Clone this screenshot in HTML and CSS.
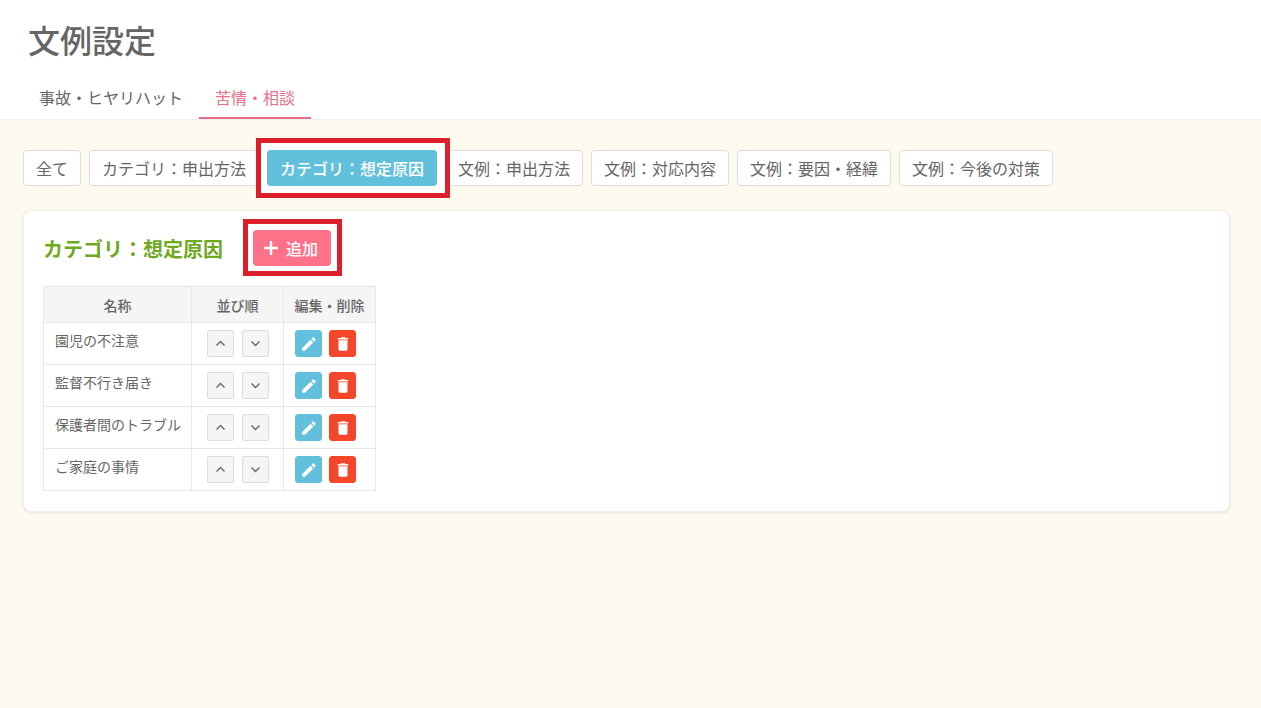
FILE: index.html
```html
<!DOCTYPE html>
<html lang="ja">
<head>
  <meta charset="UTF-8">
  <title>文例設定</title>
  <link rel="stylesheet" href="styles.css">
</head>
<body>
  <header class="page-header">
    <h1>文例設定</h1>
    <nav class="tabs">
      <a class="tab">事故・ヒヤリハット</a>
      <a class="tab active">苦情・相談</a>
    </nav>
  </header>
  <main class="content">
    <div class="filters">
      <button class="filter">全て</button>
      <button class="filter">カテゴリ：申出方法</button>
      <button class="filter active">カテゴリ：想定原因</button>
      <button class="filter">文例：申出方法</button>
      <button class="filter">文例：対応内容</button>
      <button class="filter">文例：要因・経緯</button>
      <button class="filter">文例：今後の対策</button>
    </div>
    <section class="card">
      <div class="card-head">
        <h2>カテゴリ：想定原因</h2>
        <button class="add-btn">
          <svg width="16" height="16" viewBox="0 0 16 16"><path d="M8 1v14M1 8h14" stroke="#fff" stroke-width="2.4" fill="none"/></svg>
          追加
        </button>
      </div>
      <table class="list">
        <thead>
          <tr><th class="col-name">名称</th><th class="col-order">並び順</th><th class="col-act">編集・削除</th></tr>
        </thead>
        <tbody>
          <tr>
            <td>園児の不注意</td>
            <td class="order"><button class="sq"><svg width="11" height="7" viewBox="0 0 11 7"><path d="M1.5 5.5l4-4 4 4" stroke="#666" stroke-width="1.4" fill="none"/></svg></button><button class="sq"><svg width="11" height="7" viewBox="0 0 11 7"><path d="M1.5 1.5l4 4 4-4" stroke="#666" stroke-width="1.4" fill="none"/></svg></button></td>
            <td class="actions"><button class="sq edit"><svg width="18" height="18" viewBox="0 0 24 24"><path fill="#fff" d="M3 17.25V21h3.75L17.81 9.94l-3.75-3.75L3 17.25zM20.71 7.04a1 1 0 0 0 0-1.41l-2.34-2.34a1 1 0 0 0-1.41 0l-1.83 1.83 3.75 3.75 1.83-1.83z"/></svg></button><button class="sq del"><svg width="18" height="18" viewBox="0 0 24 24"><path fill="#fff" d="M6 19c0 1.1.9 2 2 2h8c1.1 0 2-.9 2-2V7H6v12zM19 4h-3.5l-1-1h-5l-1 1H5v2h14V4z"/></svg></button></td>
          </tr>
          <tr>
            <td>監督不行き届き</td>
            <td class="order"><button class="sq"><svg width="11" height="7" viewBox="0 0 11 7"><path d="M1.5 5.5l4-4 4 4" stroke="#666" stroke-width="1.4" fill="none"/></svg></button><button class="sq"><svg width="11" height="7" viewBox="0 0 11 7"><path d="M1.5 1.5l4 4 4-4" stroke="#666" stroke-width="1.4" fill="none"/></svg></button></td>
            <td class="actions"><button class="sq edit"><svg width="18" height="18" viewBox="0 0 24 24"><path fill="#fff" d="M3 17.25V21h3.75L17.81 9.94l-3.75-3.75L3 17.25zM20.71 7.04a1 1 0 0 0 0-1.41l-2.34-2.34a1 1 0 0 0-1.41 0l-1.83 1.83 3.75 3.75 1.83-1.83z"/></svg></button><button class="sq del"><svg width="18" height="18" viewBox="0 0 24 24"><path fill="#fff" d="M6 19c0 1.1.9 2 2 2h8c1.1 0 2-.9 2-2V7H6v12zM19 4h-3.5l-1-1h-5l-1 1H5v2h14V4z"/></svg></button></td>
          </tr>
          <tr>
            <td>保護者間のトラブル</td>
            <td class="order"><button class="sq"><svg width="11" height="7" viewBox="0 0 11 7"><path d="M1.5 5.5l4-4 4 4" stroke="#666" stroke-width="1.4" fill="none"/></svg></button><button class="sq"><svg width="11" height="7" viewBox="0 0 11 7"><path d="M1.5 1.5l4 4 4-4" stroke="#666" stroke-width="1.4" fill="none"/></svg></button></td>
            <td class="actions"><button class="sq edit"><svg width="18" height="18" viewBox="0 0 24 24"><path fill="#fff" d="M3 17.25V21h3.75L17.81 9.94l-3.75-3.75L3 17.25zM20.71 7.04a1 1 0 0 0 0-1.41l-2.34-2.34a1 1 0 0 0-1.41 0l-1.83 1.83 3.75 3.75 1.83-1.83z"/></svg></button><button class="sq del"><svg width="18" height="18" viewBox="0 0 24 24"><path fill="#fff" d="M6 19c0 1.1.9 2 2 2h8c1.1 0 2-.9 2-2V7H6v12zM19 4h-3.5l-1-1h-5l-1 1H5v2h14V4z"/></svg></button></td>
          </tr>
          <tr>
            <td>ご家庭の事情</td>
            <td class="order"><button class="sq"><svg width="11" height="7" viewBox="0 0 11 7"><path d="M1.5 5.5l4-4 4 4" stroke="#666" stroke-width="1.4" fill="none"/></svg></button><button class="sq"><svg width="11" height="7" viewBox="0 0 11 7"><path d="M1.5 1.5l4 4 4-4" stroke="#666" stroke-width="1.4" fill="none"/></svg></button></td>
            <td class="actions"><button class="sq edit"><svg width="18" height="18" viewBox="0 0 24 24"><path fill="#fff" d="M3 17.25V21h3.75L17.81 9.94l-3.75-3.75L3 17.25zM20.71 7.04a1 1 0 0 0 0-1.41l-2.34-2.34a1 1 0 0 0-1.41 0l-1.83 1.83 3.75 3.75 1.83-1.83z"/></svg></button><button class="sq del"><svg width="18" height="18" viewBox="0 0 24 24"><path fill="#fff" d="M6 19c0 1.1.9 2 2 2h8c1.1 0 2-.9 2-2V7H6v12zM19 4h-3.5l-1-1h-5l-1 1H5v2h14V4z"/></svg></button></td>
          </tr>
        </tbody>
      </table>
    </section>
  </main>
</body>
</html>
```

FILE: styles.css
```css
* {
  box-sizing: border-box;
}
html, body {
  height: 100%;
}
body {
  margin: 0;
  display: flex;
  flex-direction: column;
  font-family: "Noto Sans CJK JP", "Noto Sans", sans-serif;
  color: #666;
  background: #fffaef;
  overflow: hidden;
}
button {
  font-family: inherit;
  cursor: pointer;
}
.page-header {
  height: 120px;
  padding: 15px 23px 0 23px;
  background: #fff;
  border-bottom: 1px solid #eee;
}
h1 {
  margin: 0 0 0 5px;
  height: 48px;
  font-size: 32px;
  line-height: 48px;
  font-weight: 500;
}
.tabs {
  display: flex;
  margin-top: 16px;
}
.tab {
  height: 40px;
  padding: 0 16px;
  font-size: 16px;
  line-height: 36px;
  border-bottom: 2px solid transparent;
}
.tab.active {
  color: #ea7088;
  border-bottom-color: #ea7088;
}
.content {
  flex: 1;
  padding: 30px 31px 0 23px;
}
.filters {
  display: flex;
  gap: 8px;
  margin-bottom: 24px;
}
.filter {
  position: relative;
  height: 36px;
  padding: 0 12px;
  font-size: 16px;
  line-height: 34px;
  color: #666;
  background: #fff;
  border: 1px solid #ddd;
  border-radius: 4px;
}
.filter.active {
  color: #fff;
  font-weight: 500;
  background: none;
  border-color: transparent;
  z-index: 1;
}
/* red annotation frame, drawn over the neighbours */
.filter.active::before {
  content: "";
  position: absolute;
  left: -12px;
  right: -14px;
  top: -13px;
  bottom: -13px;
  border: 5px solid #dc1f2b;
  background: #fff;
  z-index: -2;
}
.filter.active::after {
  content: "";
  position: absolute;
  inset: -1px;
  background: #62c0dd;
  border-radius: 4px;
  z-index: -1;
}
.card {
  height: 302px;
  padding: 19px;
  background: #fff;
  border: 1px solid #f2efe8;
  border-radius: 8px;
  box-shadow: 0 1px 3px rgba(0,0,0,0.1);
}
.card-head {
  display: flex;
  align-items: center;
  gap: 30px;
  margin-bottom: 20px;
}
h2 {
  margin: 0;
  font-size: 20px;
  font-weight: 700;
  color: #6fa91f;
}
.add-btn {
  position: relative;
  display: flex;
  align-items: center;
  justify-content: center;
  gap: 7px;
  width: 78px;
  height: 36px;
  padding: 0 3px 0 0;
  font-size: 16px;
  font-weight: 500;
  color: #fff;
  background: none;
  border: none;
  z-index: 1;
}
.add-btn::before {
  content: "";
  position: absolute;
  left: -10px;
  right: -11px;
  top: -11px;
  bottom: -10px;
  border: 5px solid #dc1f2b;
  background: #fff;
  z-index: -2;
}
.add-btn::after {
  content: "";
  position: absolute;
  inset: 0;
  background: #ff7089;
  border-radius: 4px;
  z-index: -1;
}
.list {
  border-collapse: collapse;
  table-layout: fixed;
  width: 333px;
  font-size: 14px;
}
.list th, .list td {
  border: 1px solid #e8e8e8;
}
.list th {
  height: 36px;
  padding: 0;
  font-weight: 500;
  background: #f5f5f5;
}
.list td {
  height: 42px;
  padding: 6px 11px 14px 11px;
  line-height: 20px;
  white-space: nowrap;
}
.col-name {
  width: 148px;
}
.col-order {
  width: 92px;
}
.list td.order {
  padding: 0 0 0 15px;
  font-size: 0;
}
.list td.actions {
  padding: 0 0 0 11px;
  font-size: 0;
}
.sq {
  display: inline-flex;
  align-items: center;
  justify-content: center;
  width: 27px;
  height: 27px;
  padding: 0;
  background: #f5f5f5;
  border: 1px solid #ddd;
  border-radius: 2px;
  vertical-align: middle;
}
.order .sq + .sq {
  margin-left: 8px;
}
.actions .sq + .sq {
  margin-left: 7px;
}
.sq.edit {
  background: #62c0dd;
  border-color: #62c0dd;
  border-radius: 3px;
}
.sq.del {
  background: #f4472a;
  border-color: #f4472a;
  border-radius: 3px;
}
```
